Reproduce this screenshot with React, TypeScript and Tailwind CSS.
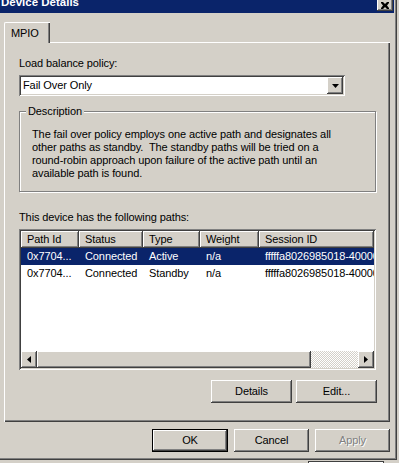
import React from 'react'

const raised =
  'shadow-[inset_-1px_-1px_#404040,inset_1px_1px_#ffffff,inset_-2px_-2px_#808080]'
const sunken =
  'shadow-[inset_1px_1px_#808080,inset_-1px_-1px_#ffffff,inset_2px_2px_#404040,inset_-2px_-2px_#d4d0c8]'

const Btn = ({
  label,
  w,
  isDefault,
  disabled,
}: {
  label: string
  w: string
  isDefault?: boolean
  disabled?: boolean
}) => (
  <div
    className={`${w} h-[23px] flex items-center justify-center ${
      isDefault
        ? 'border border-black shadow-[inset_-1px_-1px_#404040,inset_1px_1px_#ffffff,inset_-2px_-2px_#808080]'
        : raised
    } ${disabled ? 'text-[#808080] [text-shadow:1px_1px_#ffffff]' : 'text-black'}`}
  >
    {label}
  </div>
)

const columns = [
  { title: 'Path Id', w: 'w-[58px]' },
  { title: 'Status', w: 'w-[64px]' },
  { title: 'Type', w: 'w-[57px]' },
  { title: 'Weight', w: 'w-[59px]' },
  { title: 'Session ID', w: 'w-[115px]' },
]

const rows = [
  ['0x7704...', 'Connected', 'Active', 'n/a', 'fffffa8026985018-4000013700000003'],
  ['0x7704...', 'Connected', 'Standby', 'n/a', 'fffffa8026985018-4000013700000004'],
]

const description = [
  'The fail over policy employs one active path and designates all',
  'other paths as standby.  The standby paths will be tried on a',
  'round-robin approach upon failure of the active path until an',
  'available path is found.',
]

export default function App() {
  return (
    <div className="w-[399px] h-[463px] bg-[#d4d0c8] overflow-hidden relative text-[11px] leading-[13px] tracking-[-0.1px] text-black font-['Liberation_Sans',Arial,sans-serif]">
      <div className="w-[397px] h-[460px] border-r border-b border-[#404040] shadow-[inset_-1px_-1px_#808080]">
        {/* title bar */}
        <div className="w-[394px] h-[13px] bg-[#0a246a] flex justify-between overflow-hidden">
          <span className="text-white font-bold text-[11.5px] leading-[13px] tracking-normal -mt-[4px] pl-[1px]">
            Device Details
          </span>
          <div
            className={`w-[16px] h-[15px] -mt-[4px] mr-[1px] bg-[#d4d0c8] ${raised} flex items-end justify-center pb-[2px]`}
          >
            <svg width="8" height="7" viewBox="0 0 8 7">
              <path d="M0 0h2l2 2 2-2h2v1L6 3.5 8 6v1H6L4 5 2 7H0V6l2-2.5L0 1z" fill="#000" />
            </svg>
          </div>
        </div>

        {/* tab strip */}
        <div className="pl-[4px] pt-[9px] flex">
          <div className="w-[46px] h-[21px] -mb-[1px] relative z-10 bg-[#d4d0c8] border-l border-t border-white rounded-tl-[2px] shadow-[inset_-1px_0_#404040,inset_-2px_0_#808080] pl-[6px] pt-[4px]">
            MPIO
          </div>
        </div>

        {/* tab panel */}
        <div className="ml-[4px] w-[386px] h-[380px] border-l border-t border-white shadow-[inset_-1px_-1px_#404040,inset_-2px_-2px_#808080] pl-[14px] pt-[14px]">
          <div>Load balance policy:</div>

          <div className={`mt-[5px] w-[326px] h-[21px] bg-white ${sunken} flex items-center p-[2px]`}>
            <span className="flex-1 pl-[2px]">Fail Over Only</span>
            <div
              className={`w-[16px] h-[17px] bg-[#d4d0c8] ${raised} flex items-center justify-center`}
            >
              <svg width="7" height="4" viewBox="0 0 7 4">
                <path d="M0 0h7L3.5 4z" fill="#000" />
              </svg>
            </div>
          </div>

          {/* group box */}
          <div className="mt-[15px] w-[357px] h-[81px] relative border border-[#808080] shadow-[inset_1px_1px_#ffffff,1px_1px_#ffffff] pl-[12px] pt-[16px]">
            <span className="absolute -top-[7px] left-[6px] bg-[#d4d0c8] px-[2px]">
              Description
            </span>
            {description.map((line) => (
              <div key={line} className="whitespace-pre">
                {line}
              </div>
            ))}
          </div>

          <div className="mt-[19px]">This device has the following paths:</div>

          {/* list view */}
          <div className={`mt-[5px] w-[357px] h-[141px] bg-white ${sunken} p-[2px] flex flex-col`}>
            <div className="flex h-[17px] overflow-hidden shrink-0">
              {columns.map((c) => (
                <div
                  key={c.title}
                  className={`${c.w} shrink-0 h-[17px] bg-[#d4d0c8] ${raised} pl-[6px] pt-[2px] whitespace-nowrap`}
                >
                  {c.title}
                </div>
              ))}
            </div>
            <div className="flex-1 overflow-hidden">
              {rows.map((r, i) => (
                <div
                  key={i}
                  className={`flex h-[17px] items-center whitespace-nowrap overflow-hidden ${
                    i === 0 ? 'bg-[#0a246a] text-white' : ''
                  }`}
                >
                  {r.map((cell, j) => (
                    <div key={j} className={`${columns[j].w} shrink-0 pl-[6px] overflow-hidden`}>
                      {cell}
                    </div>
                  ))}
                </div>
              ))}
            </div>
            {/* horizontal scrollbar */}
            <div className="flex h-[17px] shrink-0">
              <div className={`w-[16px] h-[17px] bg-[#d4d0c8] ${raised} flex items-center justify-center`}>
                <svg width="4" height="7" viewBox="0 0 4 7">
                  <path d="M4 0v7L0 3.5z" fill="#000" />
                </svg>
              </div>
              <div className={`w-[274px] h-[17px] bg-[#d4d0c8] ${raised}`} />
              <div className="flex-1 h-[17px] bg-[repeating-conic-gradient(#d4d0c8_0_25%,#ffffff_0_50%)] bg-[length:2px_2px]" />
              <div className={`w-[16px] h-[17px] bg-[#d4d0c8] ${raised} flex items-center justify-center`}>
                <svg width="4" height="7" viewBox="0 0 4 7">
                  <path d="M0 0v7L4 3.5z" fill="#000" />
                </svg>
              </div>
            </div>
          </div>

          <div className="mt-[10px] w-[358px] flex justify-end gap-[4px]">
            <Btn label="Details" w="w-[81px]" />
            <Btn label="Edit..." w="w-[81px]" />
          </div>
        </div>

        {/* dialog buttons */}
        <div className="mt-[7px] w-[390px] flex justify-end gap-[6px]">
          <Btn label="OK" w="w-[76px]" isDefault />
          <Btn label="Cancel" w="w-[75px]" />
          <Btn label="Apply" w="w-[75px]" disabled />
        </div>
      </div>
      <div className="absolute left-[308px] top-[461px] w-[76px] h-[4px] bg-[#d4d0c8] border border-[#404040] shadow-[inset_1px_1px_#ffffff]" />
    </div>
  )
}
